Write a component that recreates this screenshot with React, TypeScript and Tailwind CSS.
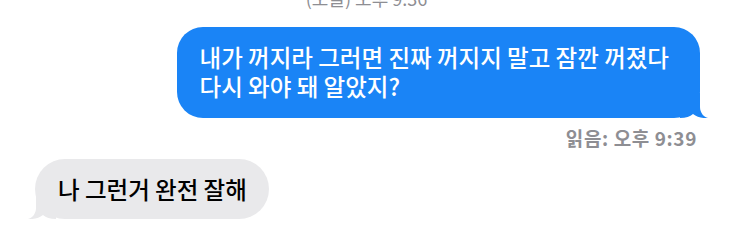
import React from "react";

const font = { fontFamily: '"Noto Sans CJK KR", "Noto Sans", sans-serif' };

export default function App() {
  return (
    <div className="w-[733px] h-[244px] overflow-hidden bg-white" style={font}>
      {/* timestamp, cut off at the top */}
      <div className="-mt-[12px] h-[20px] text-center text-[18px] leading-[20px] text-[#8e8e93]">
        (오늘) 오후 9:36
      </div>

      {/* outgoing */}
      <div className="flex justify-end pr-[33px] mt-[19px]">
        <div className="relative rounded-[26px] bg-[#1a84f6] pl-[23px] pr-[31px] pt-[16px] pb-[17px] text-[23.5px] leading-[29px] font-medium text-white whitespace-nowrap">
          내가 꺼지라 그러면 진짜 꺼지지 말고 잠깐 꺼졌다
          <br />
          다시 와야 돼 알았지?
          <svg className="absolute right-[-8px] bottom-0" width="28" height="25" viewBox="0 0 28 25">
            <path d="M0,0 H20 V14 C20,20 24,24 28,25 C22,25.5 17,24 13,21 C10,23.5 6,25 0,25 Z" fill="#1a84f6" />
          </svg>
        </div>
      </div>

      <div className="flex justify-end pr-[36px] mt-[8px] text-[19px] leading-[24px] tracking-[0.6px] font-semibold text-[#8e8e93]">
        읽음: 오후 9:39
      </div>

      {/* incoming */}
      <div className="flex justify-start pl-[35px] mt-[9px]">
        <div className="relative rounded-[30px] bg-[#e9e9eb] pl-[23px] pr-[22px] py-[15px] text-[23.5px] leading-[30px] font-medium text-black whitespace-nowrap">
          나 그런거 완전 잘해
          <svg className="absolute left-[-7px] bottom-0" width="28" height="25" viewBox="0 0 28 25">
            <path d="M28,0 H8 V14 C8,20 4,24 0,25 C6,25.5 11,24 15,21 C18,23.5 22,25 28,25 Z" fill="#e9e9eb" />
          </svg>
        </div>
      </div>
    </div>
  );
}
